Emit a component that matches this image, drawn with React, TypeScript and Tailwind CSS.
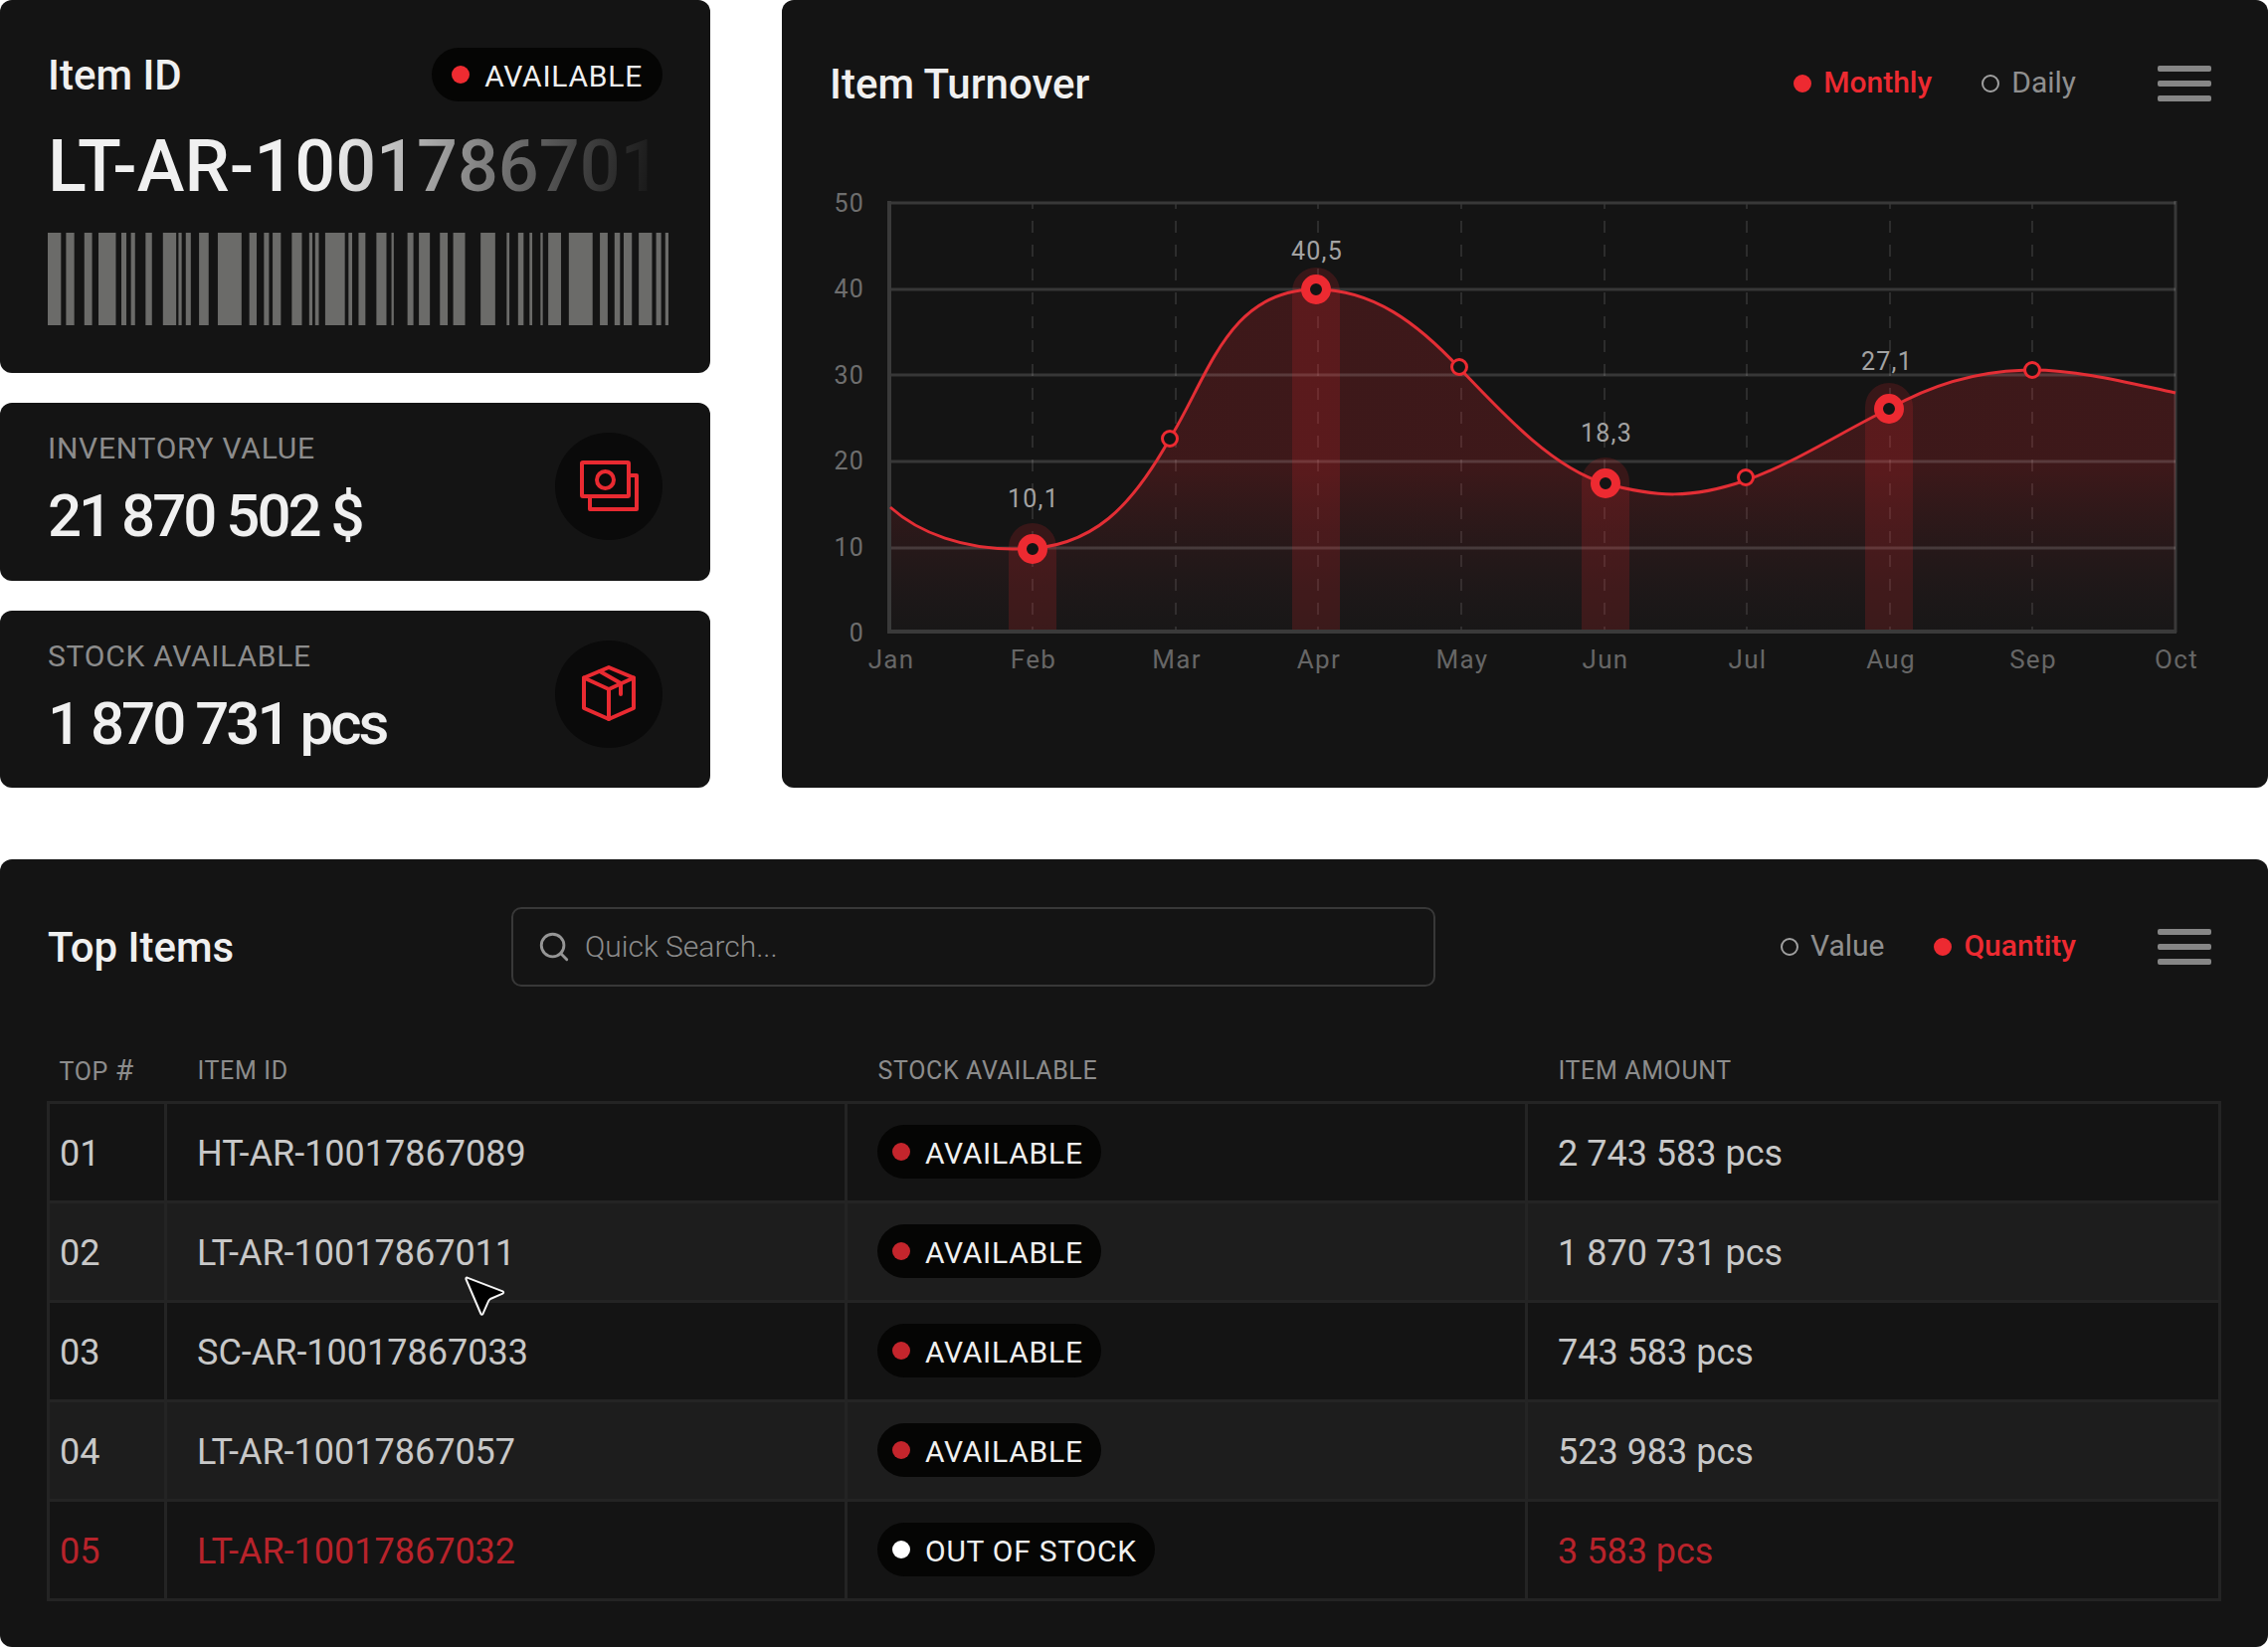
import { ReactNode } from "react";
import { Search } from "lucide-react";

const BARS: [number, number][] = [
  [0, 29], [40, 58], [80, 97], [111, 149], [161, 172], [182, 191], [214, 228], [252, 281],
  [286, 293], [302, 313], [331, 352], [372, 424], [441, 457], [473, 484], [492, 510], [534, 556],
  [572, 579], [585, 593], [607, 650], [658, 666], [680, 695], [719, 741], [752, 757], [787, 800],
  [812, 836], [858, 875], [887, 913], [947, 979], [1004, 1010], [1029, 1041], [1054, 1060],
  [1078, 1083], [1095, 1123], [1140, 1192], [1208, 1225], [1240, 1252], [1260, 1278],
  [1293, 1322], [1331, 1342], [1351, 1358],
];

function StatusPill({ label, dot, roomy = false }: { label: string; dot: string; roomy?: boolean }) {
  return (
    <span
      className={`inline-flex h-[54px] items-center gap-[15px] rounded-full bg-[#050504] text-[30px] leading-[36px] tracking-wide whitespace-nowrap text-[#f0f0f0] align-middle ${
        roomy ? "px-5" : "pr-[18px] pl-[15px]"
      }`}
    >
      <span className={`size-[18px] rounded-full ${dot}`} />
      <span className="pt-[3px]">{label}</span>
    </span>
  );
}

function CardTitle({ children }: { children: ReactNode }) {
  return (
    <h2 className="pt-[2px] text-[42px] leading-[48px] font-medium whitespace-nowrap text-[#f0f0f0]">
      {children}
    </h2>
  );
}

function ItemCard() {
  return (
    <section className="rounded-xl bg-[#141414] pt-12 pr-[42px] pb-12 pl-12">
      <div className="flex items-center justify-between pr-[6px]">
        <CardTitle>Item ID</CardTitle>
        <StatusPill label="AVAILABLE" dot="bg-[#ee2b31]" roomy />
      </div>
      <p className="mt-6 overflow-hidden bg-linear-100 from-[#f0f0f0] from-45% to-[#141414] to-98% bg-clip-text text-[72px] leading-[84px] font-medium whitespace-nowrap text-transparent">
        LT-AR-1001786701
      </p>
      <svg
        className="mt-6 block h-[93px] w-full"
        viewBox="0 0 1358 93"
        preserveAspectRatio="none"
        role="img"
        aria-label="Barcode"
      >
        {BARS.map(([a, b]) => (
          <rect key={a} x={a} y="0" width={b - a} height="93" fill="#6b6b69" />
        ))}
      </svg>
    </section>
  );
}

function StatCard({ label, value, children }: { label: string; value: string; children: ReactNode }) {
  return (
    <section className="flex flex-1 items-start justify-between rounded-xl bg-[#141414] px-12 py-[30px]">
      <div>
        <h3 className="text-[30px] leading-8 tracking-wide text-[#8c8c8c]">{label}</h3>
        <p className="mt-[18px] text-[60px] leading-[68px] font-medium tracking-tighter whitespace-nowrap text-[#f0f0f0]">
          {value}
        </p>
      </div>
      <div className="size-[108px] rounded-full bg-[#0a0a0a]">
        <svg
          viewBox="0 0 108 108"
          className="size-full"
          fill="none"
          stroke="#e92a31"
          strokeWidth="4"
          strokeLinejoin="round"
          strokeLinecap="round"
          aria-hidden="true"
        >
          {children}
        </svg>
      </div>
    </section>
  );
}

function Toggle({ name, label, checked = false }: { name: string; label: string; checked?: boolean }) {
  return (
    <label className="flex items-center gap-3 text-[30px] leading-[36px] text-[#8f8f8f] has-checked:font-medium has-checked:text-[#ed2a31]">
      <input
        type="radio"
        name={name}
        defaultChecked={checked}
        className="size-[18px] appearance-none rounded-full border-2 border-[#a0a0a0] checked:border-[#ed2a31] checked:bg-[#ed2a31]"
      />
      <span className="pb-[2px]">{label}</span>
    </label>
  );
}

function MenuButton({ label }: { label: string }) {
  return (
    <button type="button" aria-label={label} className="flex w-[54px] flex-col gap-[9px]">
      <span className="h-[6px] w-full rounded-[2px] bg-[#868686]" />
      <span className="h-[6px] w-full rounded-[2px] bg-[#868686]" />
      <span className="h-[6px] w-full rounded-[2px] bg-[#868686]" />
    </button>
  );
}

const CURVE =
  "M109,330 C139,357 184,372 234,372 C314,374 354,325 390,261 C430,196 449,111 537,111 C594,111 639,145 681,190 C724,235 774,290 827,306 C879,320 914,322 969,303 C1019,285 1064,255 1113,231 C1164,202 1214,192 1257,192 C1304,192 1354,205 1401,215";

const LEVELS: [string, number][] = [
  ["50", 24], ["40", 111], ["30", 197], ["20", 284], ["10", 371], ["0", 455],
];
const MONTHS: [string, number][] = [
  ["Jan", 109], ["Feb", 252], ["Mar", 396], ["Apr", 539], ["May", 683],
  ["Jun", 827], ["Jul", 970], ["Aug", 1114], ["Sep", 1257], ["Oct", 1401],
];
const PEAKS = [
  { x: 252, y: 372, top: 370, label: "10,1", at: 330, lx: 253 },
  { x: 537, y: 111, top: 113, label: "40,5", at: 81, lx: 538 },
  { x: 828, y: 306, top: 304, label: "18,3", at: 264, lx: 829 },
  { x: 1113, y: 231, top: 229, label: "27,1", at: 192, lx: 1111 },
];
const POINTS: [number, number][] = [[390, 261], [681, 189], [969, 300], [1257, 192]];

function TurnoverChart() {
  return (
    <svg
      viewBox="0 0 1494 510"
      className="mt-[66px] block w-full font-['Roboto',sans-serif]"
      role="img"
      aria-label="Item turnover by month"
    >
      <defs>
        <linearGradient id="area" gradientUnits="userSpaceOnUse" x1="0" y1="290" x2="0" y2="455">
          <stop offset="0" stopColor="#ed2a31" stopOpacity="0.19" />
          <stop offset="1" stopColor="#5a4248" stopOpacity="0.06" />
        </linearGradient>
      </defs>
      {MONTHS.slice(1, -1).map(([m, x]) => (
        <line key={m} x1={x} x2={x} y1="24" y2="455" stroke="#fff" strokeOpacity="0.11" strokeWidth="2" strokeDasharray="12 12" strokeDashoffset="6" />
      ))}
      <path d={`${CURVE} V455 H109 Z`} fill="url(#area)" />
      {LEVELS.slice(1, -1).map(([l, y]) => (
        <line key={l} x1="109" x2="1401" y1={y} y2={y} stroke="#fff" strokeOpacity="0.15" strokeWidth="3" />
      ))}
      <path d="M107,24 H1401" stroke="#383838" strokeWidth="3" />
      <path d="M1401,22 V456" stroke="#fff" strokeOpacity="0.15" strokeWidth="3" />
      <path d="M108,22 V455 H1402" stroke="#3a3a3a" strokeWidth="4" fill="none" />
      {PEAKS.map((p) => (
        <path
          key={p.x}
          d={`M${p.x - 24},453 V${p.top} a24,24 0 0 1 48,0 V453 Z`}
          fill="#ed2a31"
          fillOpacity="0.17"
        />
      ))}
      <path d={CURVE} fill="none" stroke="#e32e35" strokeWidth="3" />
      {POINTS.map(([x, y]) => (
        <circle key={x} cx={x} cy={y} r="7.5" fill="#141414" stroke="#ed2a31" strokeWidth="3" />
      ))}
      {PEAKS.map((p) => (
        <g key={p.x}>
          <circle cx={p.x} cy={p.y} r="10.5" fill="#141414" stroke="#ed2a31" strokeWidth="9" />
          <text x={p.lx} y={p.at} textAnchor="middle" fill="#a3a3a3" className="text-[25px] tracking-wider">
            {p.label}
          </text>
        </g>
      ))}
      {LEVELS.map(([l], i) => (
        <text key={l} x="83" y={33 + Math.round(i * 86.4)} textAnchor="end" fill="#6e6e6e" className="text-[25px] tracking-wider">
          {l}
        </text>
      ))}
      {MONTHS.map(([m, x]) => (
        <text key={m} x={x + 1} y="492" textAnchor="middle" fill="#666666" className="text-[26px] tracking-wider">
          {m}
        </text>
      ))}
    </svg>
  );
}

const ITEMS = [
  { top: "01", id: "HT-AR-10017867089", stock: true, amount: "2 743 583 pcs" },
  { top: "02", id: "LT-AR-10017867011", stock: true, amount: "1 870 731 pcs", pointer: true },
  { top: "03", id: "SC-AR-10017867033", stock: true, amount: "743 583 pcs" },
  { top: "04", id: "LT-AR-10017867057", stock: true, amount: "523 983 pcs" },
  { top: "05", id: "LT-AR-10017867032", stock: false, amount: "3 583 pcs" },
];

function Pointer() {
  return (
    <svg
      viewBox="0 0 42 42"
      className="pointer-events-none absolute top-[44px] left-[269px] size-[42px]"
      fill="#000"
      stroke="#f4f4f4"
      strokeWidth="2"
      strokeLinejoin="round"
      aria-hidden="true"
    >
      <path d="M2.6 1.6 L38.4 15.4 Q40 16.6 38.4 17.6 L26 23 Q24.6 24 24 25.4 L18.4 38.2 Q17.4 39.6 16.4 38 L1.4 3 Q1.2 1.4 2.6 1.6 Z" />
    </svg>
  );
}

function TopItems() {
  return (
    <section className="rounded-xl bg-[#141414] pt-12 pb-[46px]">
      <div className="grid grid-cols-[466px_1fr_780px] items-center pr-[57px] pl-12">
        <CardTitle>Top Items</CardTitle>
        <label className="flex h-20 items-center gap-[14px] rounded-[10px] border-2 border-[#383838] px-6">
          <Search size={34} strokeWidth={2} color="#969696" aria-hidden="true" />
          <input
            type="search"
            aria-label="Quick search"
            placeholder="Quick Search..."
            className="min-w-0 flex-1 bg-transparent text-[30px] leading-[36px] font-light text-[#f0f0f0] outline-none placeholder:text-[#8c8c8c]"
          />
        </label>
        <div className="flex items-center justify-end gap-[50px]">
          <Toggle name="measure" label="Value" />
          <Toggle name="measure" label="Quantity" checked />
          <div className="pl-8">
            <MenuButton label="Top items menu" />
          </div>
        </div>
      </div>
      <div className="mt-[52px] px-[47px]">
        <table className="w-full table-fixed border-collapse text-left">
          <colgroup>
            <col className="w-[118px]" />
            <col className="w-[684px]" />
            <col className="w-[684px]" />
            <col />
          </colgroup>
          <thead>
            <tr className="h-16 text-[25px] leading-8 tracking-wide text-[#8c8c8c]">
              <th className="pt-[3px] pl-[11px] font-normal whitespace-nowrap">
                TOP <span className="text-[30px] leading-8">#</span>
              </th>
              <th className="pt-[3px] pl-8 font-normal">ITEM ID</th>
              <th className="pt-[3px] pl-8 font-normal">STOCK AVAILABLE</th>
              <th className="pt-[3px] pl-8 font-normal">ITEM AMOUNT</th>
            </tr>
          </thead>
          <tbody>
            {ITEMS.map((item) => (
              <tr
                key={item.top}
                className={`h-[100px] text-[36px] leading-[42px] even:bg-[#1d1d1d] ${
                  item.stock ? "text-[#c8c8c8]" : "text-[#b8232b]"
                }`}
              >
                <td className="border-3 border-[#242424] pt-[3px] pl-[10px]">{item.top}</td>
                <td className="border-3 border-[#242424] pt-[3px] pl-[30px]">
                  <span className="relative inline-block">
                    {item.id}
                    {item.pointer && <Pointer />}
                  </span>
                </td>
                <td className="border-3 border-[#242424] pl-[30px]">
                  <StatusPill
                    label={item.stock ? "AVAILABLE" : "OUT OF STOCK"}
                    dot={item.stock ? "bg-[#c4252c]" : "bg-white"}
                  />
                </td>
                <td className="border-3 border-[#242424] pt-[3px] pl-[30px]">{item.amount}</td>
              </tr>
            ))}
          </tbody>
        </table>
      </div>
    </section>
  );
}

export default function App() {
  return (
    <main className="flex flex-col gap-[72px] bg-white font-['Roboto',sans-serif]">
      <div className="grid grid-cols-[714fr_1494fr] gap-[72px]">
        <div className="flex min-w-0 flex-col gap-[30px]">
          <ItemCard />
          <StatCard label="INVENTORY VALUE" value="21 870 502 $">
            <rect x="27" y="30" width="47" height="34" rx="1" />
            <circle cx="50.5" cy="47.5" r="8.5" />
            <path d="M74 43 H82 V77 H35 V64" />
          </StatCard>
          <StatCard label="STOCK AVAILABLE" value="1 870 731 pcs">
            <path d="M54 27 L79 37.5 V68 L54 79 L29 68 V37.5 Z" />
            <path d="M29 37.5 L54 49 L79 37.5 M54 49 V79" />
            <path d="M45 31 L66 43 V54" />
          </StatCard>
        </div>
        <section className="min-w-0 rounded-xl bg-[#141414] pt-[54px] pb-[102px]">
          <div className="flex h-[60px] items-center justify-between pr-[57px] pl-12">
            <CardTitle>Item Turnover</CardTitle>
            <div className="flex items-center gap-[50px]">
              <Toggle name="period" label="Monthly" checked />
              <Toggle name="period" label="Daily" />
              <div className="pl-8">
                <MenuButton label="Turnover menu" />
              </div>
            </div>
          </div>
          <TurnoverChart />
        </section>
      </div>
      <TopItems />
    </main>
  );
}
